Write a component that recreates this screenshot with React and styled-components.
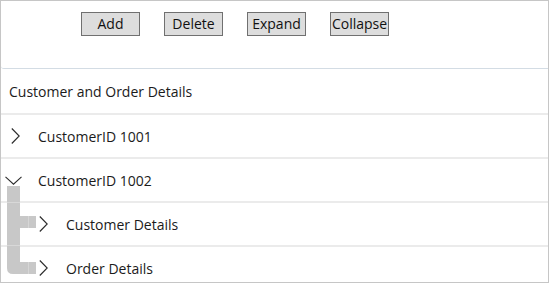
import React from "react";
import styled, { createGlobalStyle } from "styled-components";

const GlobalStyle = createGlobalStyle`
  body {
    margin: 0;
    background: #fff;
    font-family: "Open Sans", "Noto Sans", sans-serif;
  }
`;

const Frame = styled.div`
  width: 549px;
  height: 283px;
  box-sizing: border-box;
  border: 1px solid #c6c6c6;
  overflow: hidden;
  background: #fff;
`;

const Toolbar = styled.div`
  height: 68px;
  box-sizing: border-box;
  border-bottom: 1px solid #d3dce4;
  border-bottom-left-radius: 3px;
  display: flex;
  align-items: flex-start;
  gap: 24px;
  padding: 11px 0 0 80px;
`;

const Button = styled.button`
  width: 59px;
  height: 24px;
  padding: 0;
  background: #dddddd;
  border: 1px solid #707070;
  border-radius: 0;
  color: #111;
  font-family: inherit;
  font-size: 14px;
  line-height: 20px;
  cursor: pointer;
`;

const Tree = styled.div`
  display: flex;
  flex-direction: column;
`;

const Row = styled.div`
  flex: none;
  height: ${p => (p.$header ? 44 : 42)}px;
  border-bottom: 2px solid #ebebeb;
  display: flex;
  align-items: center;
  padding-left: ${p => (p.$header ? 8 : 2 + p.$level * 28)}px;
  font-size: 14px;
  color: #1b1b1b;
`;

const Toggle = styled.span`
  width: 24px;
  flex: none;
  display: flex;
  align-items: center;
  padding-left: ${p => (p.$open ? 2 : 8)}px;
  box-sizing: border-box;
`;

const Label = styled.span`
  margin-left: 11px;
  white-space: nowrap;
`;

const Group = styled.div`
  position: relative;
  display: flex;
  flex-direction: column;
`;

const Connector = styled.svg`
  position: absolute;
  left: 6px;
  top: -17px;
  pointer-events: none;
`;

function Chevron({ open }) {
  return open ? (
    <svg width="17" height="9" viewBox="0 0 17 9">
      <path d="M0.5 0.8 L8.5 8.2 L16.5 0.8" fill="none" stroke="#2b2b2b" strokeWidth="1.1" />
    </svg>
  ) : (
    <svg width="9" height="16" viewBox="0 0 9 16">
      <path d="M0.8 0.5 L8.2 8 L0.8 15.5" fill="none" stroke="#2b2b2b" strokeWidth="1.1" />
    </svg>
  );
}

function Node({ level, label, open, hasChildren = true }) {
  return (
    <Row $level={level}>
      <Toggle $open={open}>{hasChildren && <Chevron open={open} />}</Toggle>
      <Label>{label}</Label>
    </Row>
  );
}

export default function App() {
  return (
    <>
      <GlobalStyle />
      <Frame>
        <Toolbar>
          <Button>Add</Button>
          <Button>Delete</Button>
          <Button>Expand</Button>
          <Button>Collapse</Button>
        </Toolbar>
        <Tree>
          <Row $header>Customer and Order Details</Row>
          <Node level={0} label="CustomerID 1001" />
          <Node level={0} label="CustomerID 1002" open />
          <Group>
            <Connector width="30" height="90" viewBox="0 0 30 90">
              <path
                d="M0 0 H13 V30 H29 V42 H13 V76 H29 V88 H6 Q0 88 0 82 Z"
                fill="#c8c8c8"
              />
              <rect x="0" y="16" width="13" height="1" fill="#d8d8d8" />
              <rect x="0" y="59" width="13" height="1" fill="#d8d8d8" />
              <rect x="21" y="30" width="1" height="12" fill="#d6d6d6" />
              <rect x="21" y="76" width="1" height="12" fill="#d6d6d6" />
            </Connector>
            <Node level={1} label="Customer Details" />
            <Node level={1} label="Order Details" />
          </Group>
        </Tree>
      </Frame>
    </>
  );
}
